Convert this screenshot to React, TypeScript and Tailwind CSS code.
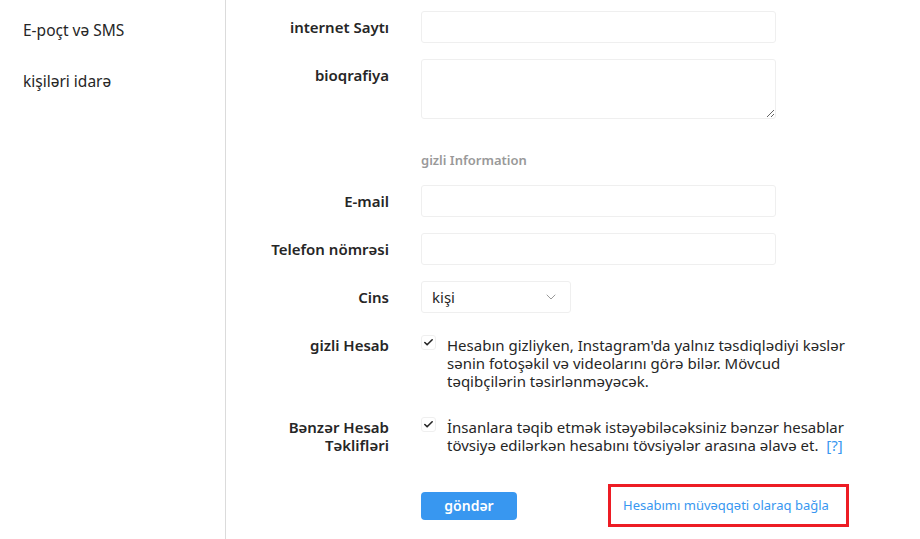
import { ChevronDown, Check } from 'lucide-react';

const font = { fontFamily: '"Noto Sans", "Open Sans", sans-serif' };

const sideItems = ['E-poçt və SMS', 'kişiləri idarə'];

const Label = ({ children }: { children: React.ReactNode }) => (
  <div className="w-[163px] shrink-0 pl-[30px] pt-[7px] text-right text-[15px] leading-[18px] font-semibold text-[#262626]">
    {children}
  </div>
);

const TextInput = () => (
  <input
    type="text"
    className="h-8 w-[355px] rounded-[3px] border border-[#efefef] bg-white px-2.5 text-sm outline-none"
  />
);

const CheckBox = () => (
  <div className="mt-[-1px] flex h-[15px] w-[15px] shrink-0 items-center justify-center rounded-[3px] border border-[#efefef] bg-white">
    <Check size={11} strokeWidth={3.5} className="text-[#262626]" />
  </div>
);

export default function App() {
  return (
    <div className="flex min-h-screen bg-white" style={font}>
      {/* sidebar */}
      <div className="w-[226px] shrink-0 border-r border-[#dbdbdb] pt-[5px]">
        {sideItems.map((item) => (
          <div key={item} className="flex h-[51px] items-center pl-[23px] text-[15.5px] text-[#262626]">
            {item}
          </div>
        ))}
      </div>

      {/* form */}
      <div className="flex-1 pt-[11px]">
        <div className="mb-4 flex gap-8">
          <Label>internet Saytı</Label>
          <TextInput />
        </div>

        <div className="mb-4 flex gap-8">
          <Label>bioqrafiya</Label>
          <textarea className="h-[60px] w-[355px] rounded-[3px] border border-[#efefef] bg-white px-2.5 py-1.5 text-sm outline-none" />
        </div>

        <div className="mb-4 flex gap-8 pt-4">
          <div className="w-[163px] shrink-0" />
          <div className="text-[13px] leading-[18px] font-semibold text-[#999999]">gizli Information</div>
        </div>

        <div className="mb-4 flex gap-8">
          <Label>E-mail</Label>
          <TextInput />
        </div>

        <div className="mb-4 flex gap-8">
          <Label>Telefon nömrəsi</Label>
          <TextInput />
        </div>

        <div className="mb-4 flex gap-8">
          <Label>Cins</Label>
          <div className="flex h-8 w-[150px] items-center justify-between rounded-[3px] border border-[#efefef] bg-white pl-[10px] pr-[11px] text-[15px] text-[#262626]">
            <span>kişi</span>
            <ChevronDown size={16} strokeWidth={1.5} className="text-[#999999]" />
          </div>
        </div>

        <div className="mb-[21px] flex gap-8">
          <Label>gizli Hesab</Label>
          <div className="flex gap-[11px] pt-[7px]">
            <CheckBox />
            <p className="w-[404px] text-[15px] leading-[18px] text-[#262626]">
              Hesabın gizliyken, Instagram'da yalnız təsdiqlədiyi kəslər sənin fotoşəkil və videolarını görə bilər. Mövcud təqibçilərin təsirlənməyəcək.
            </p>
          </div>
        </div>

        <div className="mb-[30px] flex gap-8">
          <Label>Bənzər Hesab Təklifləri</Label>
          <div className="flex gap-[11px] pt-[7px]">
            <CheckBox />
            <p className="w-[404px] text-[15px] leading-[18px] text-[#262626]">
              İnsanlara təqib etmək istəyəbiləcəksiniz bənzər hesablar tövsiyə edilərkən hesabını tövsiyələr arasına əlavə et.{'  '}
              <span className="pl-1 text-[#3897f0]">[?]</span>
            </p>
          </div>
        </div>

        <div className="flex items-center gap-8">
          <div className="w-[163px] shrink-0" />
          <button className="h-7 w-24 rounded-[4px] bg-[#3897f0] text-sm font-semibold text-white">göndər</button>
          <div className="ml-[59px] flex h-[43px] w-[241px] items-center border-[3px] border-[#ed1c24] pl-3">
            <span className="text-[13px] text-[#3897f0]">Hesabımı müvəqqəti olaraq bağla</span>
          </div>
        </div>
      </div>
    </div>
  );
}
